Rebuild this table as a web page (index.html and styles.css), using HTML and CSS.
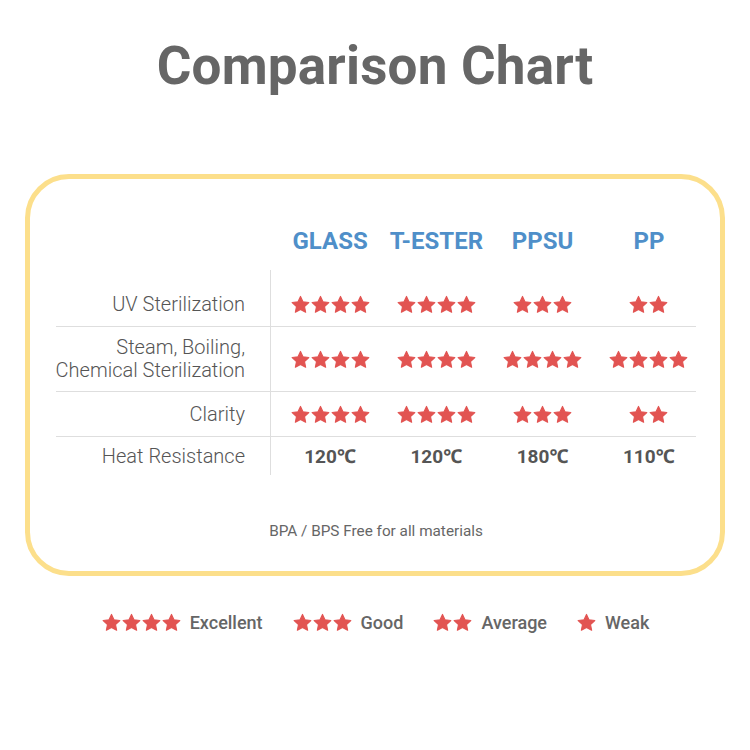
FILE: index.html
```html
<!DOCTYPE html>
<html>
<head>
<meta charset="utf-8">
<link rel="stylesheet" href="styles.css">
</head>
<body>
<svg class="defs" width="0" height="0" aria-hidden="true">
  <defs>
    <symbol id="star" viewBox="0 0 24 24">
      <path d="M12 2.8 L14.82 8.92 L21.51 9.71 L16.57 14.28 L17.88 20.89 L12 17.6 L6.12 20.89 L7.43 14.28 L2.49 9.71 L9.18 8.92 Z" fill="#e25452" stroke="#e25452" stroke-width="1.3" stroke-linejoin="round"/>
    </symbol>
  </defs>
</svg>
<main class="page">
  <h1 class="title">Comparison Chart</h1>
  <section class="card">
    <div class="table">
      <div class="head-row">
        <div class="label-cell"></div>
        <div class="col-head">GLASS</div>
        <div class="col-head">T-ESTER</div>
        <div class="col-head">PPSU</div>
        <div class="col-head">PP</div>
      </div>
      <div class="row row-uv">
        <div class="label-cell">UV Sterilization</div>
        <div class="cell"><span class="stars"><svg><use href="#star"/></svg><svg><use href="#star"/></svg><svg><use href="#star"/></svg><svg><use href="#star"/></svg></span></div>
        <div class="cell"><span class="stars"><svg><use href="#star"/></svg><svg><use href="#star"/></svg><svg><use href="#star"/></svg><svg><use href="#star"/></svg></span></div>
        <div class="cell"><span class="stars"><svg><use href="#star"/></svg><svg><use href="#star"/></svg><svg><use href="#star"/></svg></span></div>
        <div class="cell"><span class="stars"><svg><use href="#star"/></svg><svg><use href="#star"/></svg></span></div>
      </div>
      <div class="row row-steam">
        <div class="label-cell"><span class="label-lines"><span class="label-line">Steam, Boiling,</span><span class="label-line">Chemical Sterilization</span></span></div>
        <div class="cell"><span class="stars"><svg><use href="#star"/></svg><svg><use href="#star"/></svg><svg><use href="#star"/></svg><svg><use href="#star"/></svg></span></div>
        <div class="cell"><span class="stars"><svg><use href="#star"/></svg><svg><use href="#star"/></svg><svg><use href="#star"/></svg><svg><use href="#star"/></svg></span></div>
        <div class="cell"><span class="stars"><svg><use href="#star"/></svg><svg><use href="#star"/></svg><svg><use href="#star"/></svg><svg><use href="#star"/></svg></span></div>
        <div class="cell"><span class="stars"><svg><use href="#star"/></svg><svg><use href="#star"/></svg><svg><use href="#star"/></svg><svg><use href="#star"/></svg></span></div>
      </div>
      <div class="row row-clarity">
        <div class="label-cell">Clarity</div>
        <div class="cell"><span class="stars"><svg><use href="#star"/></svg><svg><use href="#star"/></svg><svg><use href="#star"/></svg><svg><use href="#star"/></svg></span></div>
        <div class="cell"><span class="stars"><svg><use href="#star"/></svg><svg><use href="#star"/></svg><svg><use href="#star"/></svg><svg><use href="#star"/></svg></span></div>
        <div class="cell"><span class="stars"><svg><use href="#star"/></svg><svg><use href="#star"/></svg><svg><use href="#star"/></svg></span></div>
        <div class="cell"><span class="stars"><svg><use href="#star"/></svg><svg><use href="#star"/></svg></span></div>
      </div>
      <div class="row row-heat">
        <div class="label-cell">Heat Resistance</div>
        <div class="cell temp">120℃</div>
        <div class="cell temp">120℃</div>
        <div class="cell temp">180℃</div>
        <div class="cell temp">110℃</div>
      </div>
    </div>
    <p class="note">BPA / BPS Free for all materials</p>
  </section>
  <ul class="legend">
    <li class="legend-item"><span class="stars"><svg><use href="#star"/></svg><svg><use href="#star"/></svg><svg><use href="#star"/></svg><svg><use href="#star"/></svg></span>Excellent</li>
    <li class="legend-item"><span class="stars"><svg><use href="#star"/></svg><svg><use href="#star"/></svg><svg><use href="#star"/></svg></span>Good</li>
    <li class="legend-item"><span class="stars"><svg><use href="#star"/></svg><svg><use href="#star"/></svg></span>Average</li>
    <li class="legend-item"><span class="stars"><svg><use href="#star"/></svg></span>Weak</li>
  </ul>
</main>
</body>
</html>
```
FILE: styles.css
```css
* { box-sizing: border-box; }
html, body { margin: 0; padding: 0; background: #fff; }
body { font-family: Roboto, "Noto Sans", sans-serif; color: #5a5a5a; }
.defs { position: absolute; width: 0; height: 0; overflow: hidden; }
.page { width: 750px; height: 750px; display: flex; flex-direction: column; align-items: center; }
.title {
  margin: 36px 0 0;
  font-size: 53px;
  line-height: 60px;
  font-weight: 700;
  color: #666;
  letter-spacing: 0.2px;
}
.card {
  margin-top: 78px;
  width: 700px;
  height: 402px;
  border: 5px solid #fcdf8b;
  border-radius: 44px;
  padding: 32px 24px 0 26px;
  display: flex;
  flex-direction: column;
}
.table { display: flex; flex-direction: column; }
.head-row, .row {
  display: grid;
  grid-template-columns: 215px repeat(4, 1fr);
}
.head-row { height: 59px; align-items: center; }
.col-head {
  padding-left: 12px;
  text-align: center;
  font-size: 24px;
  font-weight: 700;
  color: #4f8fc9;
  line-height: 1;
}
.row { border-bottom: 1px solid #dedede; }
.row:last-child { border-bottom: none; }
.row > .label-cell, .row > .cell { display: flex; align-items: center; }
.row > .label-cell {
  justify-content: flex-end;
  text-align: right;
  white-space: nowrap;
  padding-right: 25px;
  border-right: 1px solid #dedede;
  font-size: 20px;
  font-weight: 300;
  color: #555;
  line-height: 23px;
}
.label-lines { display: flex; flex-direction: column; align-items: flex-end; }
.label-line { display: block; line-height: 23px; }
.cell { justify-content: center; padding-left: 12px; }
.row-uv { height: 57px; }
.row-uv > div { padding-top: 12px; }
.row-steam { height: 65px; }
.row-clarity { height: 45px; }
.row-heat { height: 38px; }
.temp { font-size: 19px; font-weight: 700; color: #555; }
.stars { display: inline-flex; gap: 0; }
.stars svg { width: 21px; height: 21px; display: block; margin-right: -1px; }
.stars svg:last-child { margin-right: 0; }
.note {
  margin: auto 0 31px;
  text-align: center;
  font-size: 15.3px;
  color: #666;
}
.legend {
  list-style: none;
  margin: 36px 0 0;
  padding: 0;
  display: flex;
  gap: 29px;
}
.legend-item {
  display: flex;
  align-items: center;
  gap: 8px;
  font-size: 18px;
  font-weight: 500;
  color: #666;
}
```
